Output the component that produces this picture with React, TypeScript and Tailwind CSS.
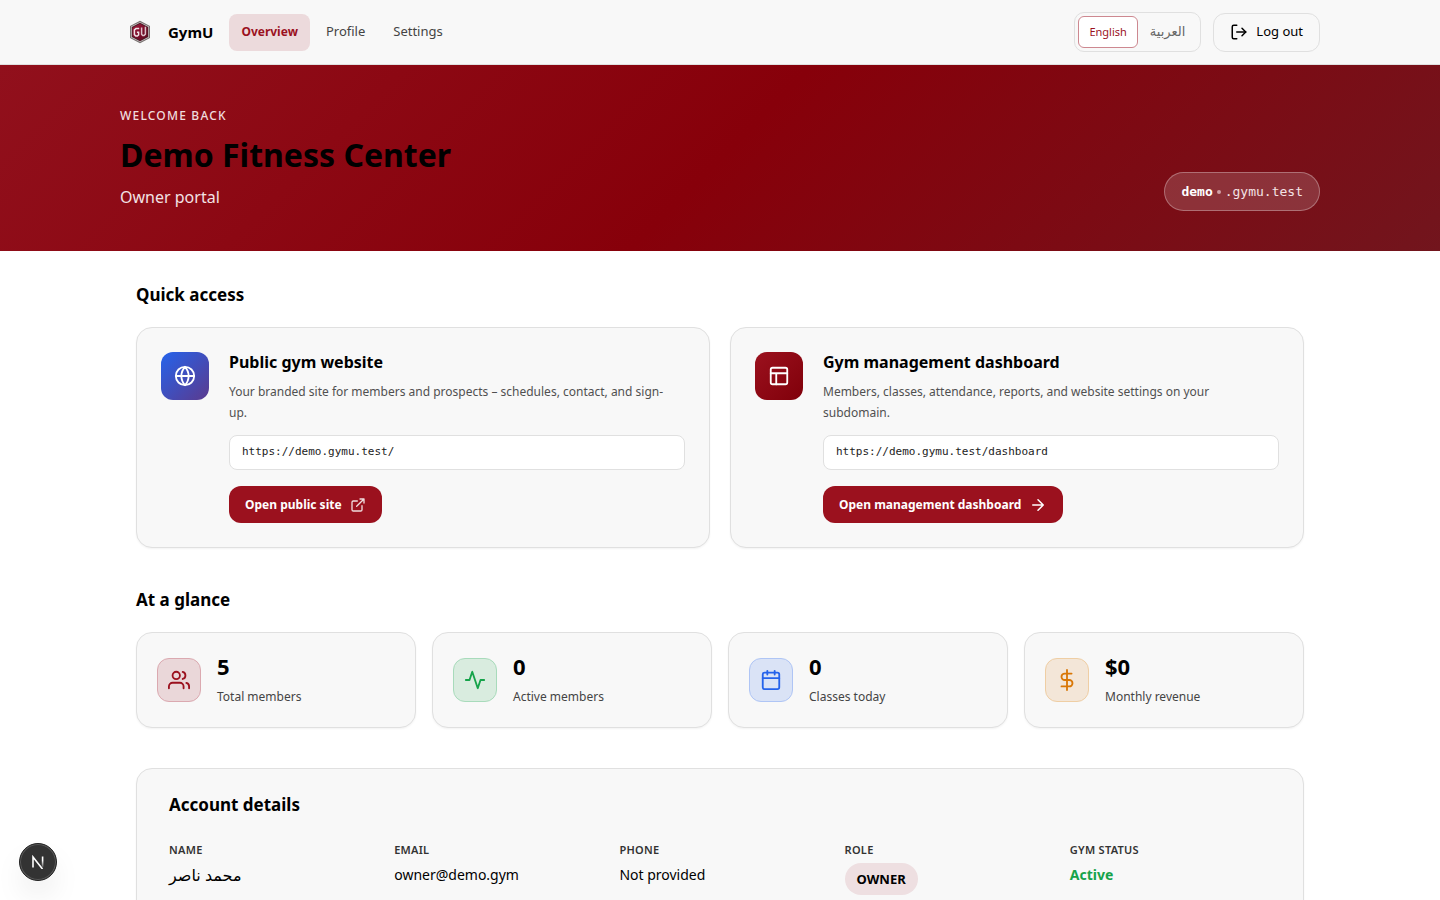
import type { ReactNode } from "react";

const FONT = "font-['Noto_Sans','DejaVu_Sans',sans-serif]";
const MONO = "font-['DejaVu_Sans_Mono',monospace]";

function Icon({ size, width = 2, className, children }: { size: number; width?: number; className?: string; children: ReactNode }) {
  return (
    <svg width={size} height={size} viewBox="0 0 24 24" fill="none" stroke="currentColor" strokeWidth={width} strokeLinecap="round" strokeLinejoin="round" className={className} aria-hidden="true">
      {children}
    </svg>
  );
}

function Logo() {
  return (
    <svg width="24" height="24" viewBox="0 0 24 24" aria-hidden="true">
      <defs>
        <linearGradient id="logo-fill" x1="0" y1="0" x2="1" y2="1">
          <stop offset="0" stopColor="#a3183a" />
          <stop offset="0.5" stopColor="#7d0f2c" />
          <stop offset="1" stopColor="#5a0a1e" />
        </linearGradient>
      </defs>
      <path d="M12 .8 22 6v12l-10 5.2L2 18V6Z" fill="#77706f" />
      <path d="M12 1.9 21 6.6v10.8l-9 4.7-9-4.7V6.6Z" fill="#c9c4c5" />
      <path d="M12 2.8 20.2 7.1v9.8L12 21.2l-8.2-4.3V7.1Z" fill="#4b1a26" />
      <path d="M12 3.8 19.4 7.7v8.6L12 20.2l-7.4-3.9V7.7Z" fill="url(#logo-fill)" />
      <path d="M11.2 8.6H8L6.4 9.8v4.8L7.8 16h1.6l1.2-1v-2.8H8.9" fill="none" stroke="#efe3e6" strokeWidth="1.5" />
      <path d="M13.6 7.4v6.8l1.1 1.2h1.4l1.3-1.2V6.8" fill="none" stroke="#dcc3ca" strokeWidth="1.5" />
    </svg>
  );
}

function Header() {
  return (
    <header className="sticky top-0 z-10 border-b border-[#e0e0e0] bg-[#f8f8f8]">
      <div className="mx-auto flex h-16 max-w-[1200px] items-center justify-between">
        <div className="flex items-center gap-4">
          <a href="#home" className="flex items-center gap-4 pl-2 text-[15px] font-bold text-black">
            <Logo />
            GymU
          </a>
          <nav className="flex items-center gap-1 text-[13px] text-[#444]">
            <a href="#overview" aria-current="page" className="flex h-[37px] items-center rounded-lg bg-[#ecdadc] px-3 text-xs font-bold text-[#9b111e]">
              Overview
            </a>
            <a href="#profile" className="px-3 py-2">Profile</a>
            <a href="#settings" className="px-3 py-2">Settings</a>
          </nav>
        </div>
        <div className="flex items-center gap-3">
          <div className="flex h-10 items-center rounded-[10px] border border-[#e0e0e0] p-[3px] text-[11px]">
            <button type="button" className="h-8 rounded-md border border-[#cd8890] bg-white px-[10px] text-[#9b111e]">English</button>
            <button type="button" lang="ar" className="h-8 px-3 text-[13px] text-[#666]">العربية</button>
          </div>
          <button type="button" className="flex h-[39px] items-center gap-2 rounded-xl border border-[#e0e0e0] px-4 text-[13px] text-black">
            <Icon size={18}>
              <path d="M9 21H5a2 2 0 0 1-2-2V5a2 2 0 0 1 2-2h4" />
              <path d="m16 17 5-5-5-5" />
              <path d="M21 12H9" />
            </Icon>
            Log out
          </button>
        </div>
      </div>
    </header>
  );
}

function Hero() {
  return (
    <section className="bg-[linear-gradient(135deg,#91101c_0%,#87000a_50%,#72151d_100%)]">
      <div className="mx-auto flex max-w-[1200px] items-end justify-between py-10">
        <div>
          <p className="text-xs leading-[22px] font-medium tracking-widest text-[#f0dcde]">WELCOME BACK</p>
          <h1 className="mt-1.5 text-[32px] leading-[44px] font-bold text-black">Demo Fitness Center</h1>
          <p className="mt-1.5 text-base leading-7 text-[#f3e2e4]">Owner portal</p>
        </div>
        <p className={`flex h-[39px] items-center rounded-full border border-white/30 bg-white/15 px-4 text-[13px] text-[#f3e2e4] ${MONO}`}>
          <b className="text-white">demo</b>
          <span className="mx-1 size-1 rounded-full bg-[#d0a0a5]" />
          .gymu.test
        </p>
      </div>
    </section>
  );
}

function AccessCard(props: { icon: ReactNode; tile: string; title: string; text: string; url: string; action: string; actionIcon: ReactNode }) {
  return (
    <article className="flex gap-5 rounded-2xl border border-[#e0e0e0] bg-[#f8f8f8] p-6 shadow-xs">
      <div className={`flex size-12 shrink-0 items-center justify-center rounded-xl text-white ${props.tile}`}>{props.icon}</div>
      <div className="min-w-0 flex-1">
        <h3 className="text-base leading-[21px] font-bold text-black">{props.title}</h3>
        <p className="mt-2 pr-2 text-xs leading-[21px] text-[#505050]">{props.text}</p>
        <div className={`mt-3 flex h-[35px] items-center rounded-lg border border-[#e0e0e0] bg-white px-3 text-[11px] text-[#222] ${MONO}`}>{props.url}</div>
        <a href={props.url} className="mt-4 inline-flex h-[37px] items-center gap-2 rounded-xl bg-[#9b111e] px-4 text-xs font-bold text-white">
          {props.action}
          {props.actionIcon}
        </a>
      </div>
    </article>
  );
}

const stats = [
  {
    value: "5", label: "Total members", tile: "border-[#dba9b0] bg-[#ead7d9] text-[#9b111e]",
    icon: (
      <>
        <path d="M17 21v-2a4 4 0 0 0-4-4H5a4 4 0 0 0-4 4v2" />
        <circle cx="9" cy="7" r="4" />
        <path d="M23 21v-2a4 4 0 0 0-3-3.87M16 3.13a4 4 0 0 1 0 7.75" />
      </>
    ),
  },
  { value: "0", label: "Active members", tile: "border-[#a8dbbb] bg-[#d9ecdf] text-[#16a34a]", icon: <path d="M22 12h-4l-3 9L9 3l-3 9H2" /> },
  {
    value: "0", label: "Classes today", tile: "border-[#afc5f5] bg-[#dae3f6] text-[#2563eb]",
    icon: (
      <>
        <rect x="3" y="4" width="18" height="18" rx="2" />
        <path d="M16 2v4M8 2v4M3 10h18" />
      </>
    ),
  },
  { value: "$0", label: "Monthly revenue", tile: "border-[#efcea4] bg-[#f3e6d8] text-[#d97706]", icon: <path d="M12 1v22M17 5H9.5a3.5 3.5 0 0 0 0 7h5a3.5 3.5 0 0 1 0 7H6" /> },
];

function Field({ label, children }: { label: string; children: ReactNode }) {
  return (
    <div>
      <dt className="text-[11px] leading-[18px] font-semibold tracking-wide text-[#333]">{label}</dt>
      <dd className="mt-1 text-sm leading-6 text-black">{children}</dd>
    </div>
  );
}

export default function App() {
  return (
    <div className={`min-h-screen bg-white text-black ${FONT}`}>
      <Header />
      <Hero />
      <main className="mx-auto max-w-[1200px] px-4 pt-8 pb-12">
        <section>
          <h2 className="text-[17px] leading-6 font-bold">Quick access</h2>
          <div className="mt-5 grid grid-cols-2 gap-5">
            <AccessCard
              tile="bg-[linear-gradient(135deg,#2563eb,#5b3a8e)]"
              icon={
                <Icon size={22}>
                  <circle cx="12" cy="12" r="10" />
                  <path d="M2 12h20M12 2a15.3 15.3 0 0 1 4 10 15.3 15.3 0 0 1-4 10 15.3 15.3 0 0 1-4-10 15.3 15.3 0 0 1 4-10z" />
                </Icon>
              }
              title="Public gym website"
              text="Your branded site for members and prospects – schedules, contact, and sign-up."
              url="https://demo.gymu.test/"
              action="Open public site"
              actionIcon={
                <Icon size={16} className="opacity-85">
                  <path d="M18 13v6a2 2 0 0 1-2 2H5a2 2 0 0 1-2-2V8a2 2 0 0 1 2-2h6M15 3h6v6M10 14 21 3" />
                </Icon>
              }
            />
            <AccessCard
              tile="bg-[linear-gradient(135deg,#9b111e,#80000a)]"
              icon={
                <Icon size={22}>
                  <rect x="3" y="3" width="18" height="18" rx="2" />
                  <path d="M3 9h18M9 21V9" />
                </Icon>
              }
              title="Gym management dashboard"
              text="Members, classes, attendance, reports, and website settings on your subdomain."
              url="https://demo.gymu.test/dashboard"
              action="Open management dashboard"
              actionIcon={
                <Icon size={18}>
                  <path d="M5 12h14M12 5l7 7-7 7" />
                </Icon>
              }
            />
          </div>
        </section>

        <section className="mt-10">
          <h2 className="text-[17px] leading-6 font-bold">At a glance</h2>
          <div className="mt-5 grid grid-cols-4 gap-4">
            {stats.map((s) => (
              <article key={s.label} className="flex h-24 items-center gap-4 rounded-2xl border border-[#e0e0e0] bg-[#f8f8f8] px-5 shadow-xs">
                <div className={`flex size-11 shrink-0 items-center justify-center rounded-xl border ${s.tile}`}>
                  <Icon size={22}>{s.icon}</Icon>
                </div>
                <div>
                  <p className="text-[22px] leading-[26px] font-bold">{s.value}</p>
                  <p className="mt-2 text-xs leading-5 text-[#444]">{s.label}</p>
                </div>
              </article>
            ))}
          </div>
        </section>

        <section className="mt-10 rounded-2xl border border-[#e0e0e0] bg-[#f8f8f8] px-8 pt-6 pb-8 shadow-xs">
          <h2 className="text-[17px] leading-6 font-bold">Account details</h2>
          <dl className="mt-6 grid grid-cols-5 gap-6">
            <Field label="NAME"><span lang="ar" className="text-base leading-6">محمد ناصر</span></Field>
            <Field label="EMAIL">owner@demo.gym</Field>
            <Field label="PHONE">Not provided</Field>
            <Field label="ROLE">
              <span className="inline-flex h-8 items-center rounded-full bg-[#eedfe1] px-3 text-[13px] font-bold">OWNER</span>
            </Field>
            <Field label="GYM STATUS"><span className="font-bold text-[#16a34a]">Active</span></Field>
          </dl>
        </section>
      </main>

      <button type="button" aria-label="Developer tools" className="fixed bottom-[19px] left-[19px] z-20 flex size-[38px] items-center justify-center rounded-full border border-[#222] bg-[#333] shadow-[inset_0_0_0_1px_#5a5a5a,0_16px_32px_-8px_rgba(0,0,0,0.18)]">
        <svg width="14" height="14" viewBox="0 0 14 14" fill="none" aria-hidden="true">
          <defs>
            <linearGradient id="n-fade" x1="0" y1="0" x2="0" y2="14" gradientUnits="userSpaceOnUse">
              <stop offset="0.4" stopColor="#fff" />
              <stop offset="0.9" stopColor="#fff" stopOpacity="0.1" />
            </linearGradient>
          </defs>
          <path d="M2 12.5V2l9.5 12" stroke="#fff" strokeWidth="1.6" />
          <path d="M11.6 1.5V12" stroke="url(#n-fade)" strokeWidth="1.6" />
        </svg>
      </button>
    </div>
  );
}
